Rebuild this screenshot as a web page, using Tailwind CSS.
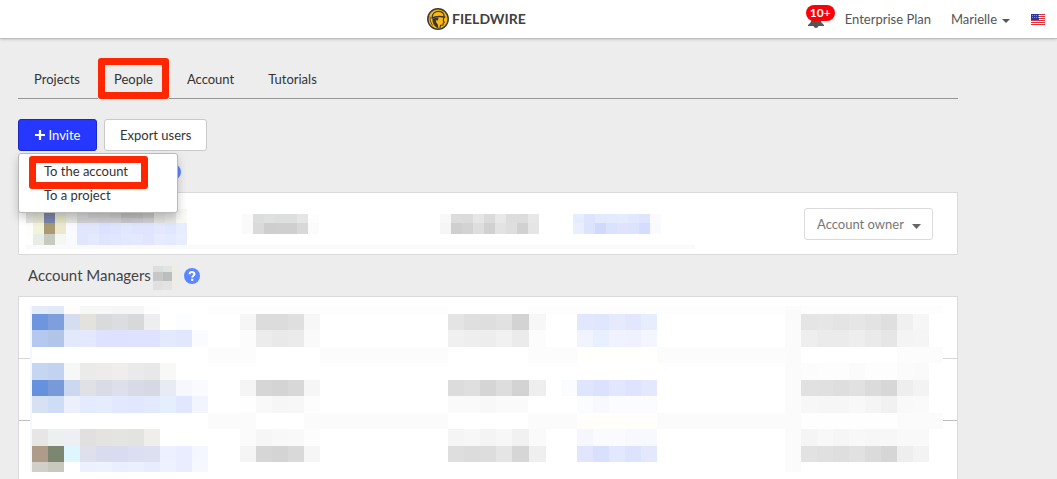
<!DOCTYPE html>
<html lang="en">
<head>
    <meta charset="UTF-8">
    <meta name="viewport" content="width=device-width, initial-scale=1.0">
    <title>Fieldwire - People</title>
    <script src="https://cdn.jsdelivr.net/npm/@tailwindcss/browser@4"></script>
</head>
<body class="bg-[#ededed] font-['Lato',sans-serif] text-[13px] leading-5 text-[#333] min-h-screen overflow-hidden">

    <header class="flex items-center h-[39px] pl-[427px] pr-3 bg-white border-b border-[#bdbdbd] shadow-sm">
        <a href="#" class="flex items-center gap-[3px] text-[14px] font-bold text-[#414042]">
            <svg class="size-[22px]" viewBox="0 0 22 22">
                <circle cx="11" cy="11" r="10.2" fill="#fdb913" stroke="#3a3833" stroke-width="1.5"/>
                <path d="M5.2 9.500C5.200 5.500 8 3.300 11.500 3.300C15 3.300 17 5.500 17.200 8.500" fill="none" stroke="#3a3833" stroke-width="1.200"/>
                <path d="M4.500 10.300C8 8.500 13 8 18.300 9.300" fill="none" stroke="#3a3833" stroke-width="1.700"/>
                <path d="M5.500 10.500L11.500 9.500L11 12.500L9.300 12L9 14L10.800 16.500L11.500 20.500C7.500 19 5 15 5.500 10.500Z" fill="#3a3833"/>
                <path d="M16.600 10L16.300 12.500L17.200 14.500L16.200 15L16 17L13.500 17.200L13 20" fill="none" stroke="#3a3833" stroke-width="1.100"/>
                <path d="M3 8.500L3.300 13L5.500 17.500" fill="none" stroke="#3a3833" stroke-width=".8"/>
            </svg>
            FIELDWIRE
        </a>
        <nav class="flex items-center ml-auto text-[#555]">
            <button type="button" aria-label="Notifications" class="relative w-[29px] h-6 mr-[10px]">
                <svg class="absolute left-[2px] top-[6px] w-4 h-4" viewBox="0 0 16 16" fill="#555">
                    <path d="M8 0C5 0 3.500 2.500 3.500 5.500C3.500 9 2 10.500 0 12V13H5.500A2.600 2.600 0 0 0 10.500 13H16V12C14 10.500 12.500 9 12.500 5.500C12.500 2.500 11 0 8 0Z"/>
                </svg>
                <span class="absolute left-0 -top-[2px] w-[29px] h-4 rounded-full bg-[#fb0007] text-white text-[12px] leading-4 font-bold text-center">10+</span>
            </button>
            <a href="#">Enterprise Plan</a>
            <button type="button" class="flex items-center gap-[5px] ml-5">
                Marielle
                <svg class="w-2 h-1 mt-[3px]" viewBox="0 0 8 4" fill="#555"><path d="M0 0H8L4 4Z"/></svg>
            </button>
            <svg class="w-[14px] h-[11px] ml-[21px]" viewBox="0 0 14 11">
                <rect width="14" height="11" fill="#fff"/>
                <path d="M0 .5H14M0 2.500H14M0 4.500H14M0 6.500H14M0 8.500H14M0 10.500H14" stroke="#e0303c" stroke-width="1.100"/>
                <rect width="8" height="6" fill="#2b3a9a"/>
                <path d="M1 1.500H8M1 3.500H8" stroke="#aeb6e0" stroke-width=".7" stroke-dasharray="1 1"/>
            </svg>
        </nav>
    </header>

    <main class="max-w-[976px] px-[18px] pt-[19px]">

        <nav class="flex gap-[2px] border-b border-[#979797]">
            <a href="#" class="px-4 pt-[11px] pb-[9px]">Projects</a>
            <a href="#" class="relative px-4 pt-[11px] pb-[9px] -mb-px bg-[#ededed]">
                People
                <span class="absolute inset-0 border-[7px] border-[#ff2600] rounded-[3px]"></span>
            </a>
            <a href="#" class="px-4 pt-[11px] pb-[9px]">Account</a>
            <a href="#" class="px-4 pt-[11px] pb-[9px]">Tutorials</a>
        </nav>

        <div class="relative flex gap-[7px] mt-5">
            <button type="button" class="flex items-center justify-center gap-1 w-[79px] h-8 rounded-[3px] bg-[#2638ff] border border-[#1a28c4] text-white">
                <svg class="size-[10px]" viewBox="0 0 10 10"><path d="M5 0V10M0 5H10" stroke="#fff" stroke-width="2.200"/></svg>
                Invite
            </button>
            <button type="button" class="h-8 px-[15px] rounded-[3px] bg-white border border-[#c9c9c9]">Export users</button>

            <div class="absolute left-0 top-[34px] z-10 w-40 h-[60px] py-[5px] bg-white border border-[#b9b9b9] rounded-[3px] shadow-[0_5px_10px_rgba(0,0,0,0.2)]">
                <a href="#" class="block px-[25px] leading-6">To the account</a>
                <a href="#" class="block px-[25px] leading-6">To a project</a>
                <span class="absolute left-[10px] top-[2px] w-[119px] h-[33px] border-[7px] border-[#ff2600] rounded-[3px]"></span>
            </div>
        </div>

        <h2 class="flex items-center h-[41px] pl-[147px]">
            <svg class="size-4" viewBox="0 0 16 16" role="img" aria-label="Help">
                <circle cx="8" cy="8" r="8" fill="#5c86ff"/>
            </svg>
        </h2>

        <section class="relative flex items-center justify-end h-[63px] pr-6 bg-white border border-[#dadada]">
            <svg id="ownerMosaic" class="absolute left-0 top-0 w-[700px] h-[61px]" viewBox="19 193 700 61" shape-rendering="crispEdges"></svg>
            <div class="relative">
                <select aria-label="Role" class="appearance-none w-[129px] h-8 pl-3 bg-white border border-[#dadada] rounded-[3px] text-[#777]">
                    <option>Account owner</option>
                </select>
                <svg class="absolute right-3 top-4 w-[9px] h-[5px] pointer-events-none" viewBox="0 0 9 5" fill="#666"><path d="M0 0H9L4.500 5Z"/></svg>
            </div>
        </section>

        <h2 class="flex items-center h-[41px] pl-[10px] pb-[2px] text-[15px] text-[#444]">
            Account Managers
            <svg id="countMosaic" class="w-[27px] h-6 mt-[6px] ml-[2px]" viewBox="153 265 27 24" shape-rendering="crispEdges"></svg>
            <svg class="size-4 ml-1 mt-[2px]" viewBox="0 0 16 16" role="img" aria-label="Help">
                <circle cx="8" cy="8" r="8" fill="#5c86ff"/>
                <path d="M5.600 6.300C5.600 3.400 10.500 3.400 10.500 6.100C10.500 7.700 8.200 7.700 8.200 9.600" fill="none" stroke="#fff" stroke-width="2"/>
                <rect x="7.100" y="10.700" width="2.200" height="2.200" fill="#fff"/>
            </svg>
        </h2>

        <section class="relative bg-white border border-[#dadada]">
            <div class="h-[62px] border-b border-[#d6d6d6]"></div>
            <div class="h-[62px] border-b border-[#bfbfbf]"></div>
            <div class="h-[62px]"></div>
            <svg id="managerMosaic" class="absolute left-[11px] top-[9px] w-[913px] h-[173px]" viewBox="30 306 913 173" shape-rendering="crispEdges"></svg>
        </section>
    </main>

    <script>
        // each run: x, y, cell width, cell height, colours from left to right
        const owner = [
            [26, 209, 7, 14, 'e6e6e4'],
            [33, 209, 11, 14, 'e4e5d0 7b84ac e3e4c8 e6e6e4 d9d9d9 d0d0ce cfcfcd cacac8 bfbfbd c0c0be c6c6c4'],
            [154, 209, 11, 14, 'e4e4e3 e9e9e7 f9faf5'],
            [77, 218, 11, 5, 'd3d3d5 d3d3d7 d0d0d6 d0d0d5 c8c8cf cacad0 d0d0d4 e3e3e3'],
            [26, 223, 7, 11, 'fdfdfa'],
            [33, 223, 11, 11, 'f1f3da a99a70 ebe8cf f8faff e1e6fe e1e6fd dbe2ff dfe4fe e1e7ff e0e5fd dfe4ff e3e8ff dfe6ff e7ecff'],
            [26, 234, 7, 11, 'fefefc'],
            [33, 234, 11, 11, 'e9ede8 c6cbbf f5f8f2 f8faff e0e6fb e4e9fd dfe5ff e0e6ff e2e8ff e4e9ff e1e6fe e6ebff e4eaff e8edff'],
            [26, 245, 669, 4, 'fafafa'],
            [242, 214, 11, 9, 'fafafa dcdddd e0e0e0 dddede dddede e5e5e5 fdfdfd'],
            [242, 223, 11, 11, 'fafafa dadada cecece cfcfcf cfcfcf d8d8d8 fbfbfb'],
            [440, 214, 11, 9, 'f8f8f8 dbdcdb dbdbdb e6e6e6 dbdbdb e8e8e8 dcdddc dbdcdb e7e7e7'],
            [440, 223, 11, 11, 'f6f6f6 cfcfcf d3d3d3 dedede d1d1d1 e3e3e3 dedede d1d1d1 e5e5e5'],
            [573, 214, 11, 9, 'e6edfd dfe4fe e4eafd e4ebfd e7ebfe e2e8fe dfe5fe fbfbff'],
            [573, 223, 11, 11, 'eaeeff dce3ff d0dbfc dbe2fe dfe3fe dbe3fe d3ddff f9faff']
        ];

        const count = [
            [153, 265, 10, 6, 'dddede e2e3e3'],
            [153, 271, 10, 9, 'c7c7c7 bcbdbd'],
            [153, 280, 10, 9, 'e0e0e0 e3e3e3'],
            [172, 265, 8, 24, 'eeece6']
        ];

        const managers = [
            [30, 306, 913, 173, 'ffffff'],
            // faint bands between the text lines
            [208, 306, 735, 8, 'fdfdfd'],
            [208, 347, 735, 16, 'fcfcfc'],
            [208, 413, 735, 16, 'fbfbfb'],
            [256, 347, 64, 16, 'ffffff'],
            [256, 413, 48, 16, 'ffffff'],
            [448, 306, 80, 8, 'ffffff'],
            [448, 347, 80, 16, 'ffffff'],
            [448, 413, 80, 16, 'ffffff'],
            [577, 347, 80, 16, 'fffffc'],
            [577, 413, 80, 16, 'fffefb'],
            [801, 347, 96, 16, 'ffffff'],
            [801, 413, 96, 16, 'fefefe'],
            [785, 306, 16, 166, 'fbfbfb'],
            [30, 306, 2, 166, 'f6f7fa'],
            // first row
            [32, 306, 16, 8, 'e4ecfa dfe9f8 fefdfb f6f7f7 f7f7f7 f6f6f6 f6f6f6 fdfdfd'],
            [32, 314, 16, 16, '6d96df 7e9fdc d5def1 e3e2dd d9dadb dcdde1 d7d8d9 eeeef0 ffffff fbfdff'],
            [32, 330, 16, 17, 'b5c8ef b1c5e8 e2e9fa e4e9ff dee2ff dfe2ff dfe3ff dfe3ff e4eafd e1e7fe fafbff'],
            [240, 314, 16, 16, 'f6f6f6 dcdcdc dcdcdc dfdfdf f7f7f7'],
            [240, 330, 16, 17, 'fcfcfc ececec e9e9e9 ebebeb fafafa'],
            [448, 314, 16, 16, 'e4e4e4 dfdfdf dedede e1e1e1'],
            [512, 314, 17, 16, 'd3d3d3 f7f7f7'],
            [448, 330, 16, 17, 'f0f0f0 eeeeee ededed f1f1f1'],
            [512, 330, 17, 17, 'ebebeb fcfcfc'],
            [577, 314, 16, 16, 'e2e7fd e0e6fe e5ebfd e2e7fe e6edfd'],
            [577, 330, 16, 17, 'f1f4ff e8effe f0f3ff eff1ff f3f6ff'],
            [801, 314, 16, 16, 'e5e5e5 e6e6e6 e4e4e4 e6e6e6 e3e3e3 dfdfdf f0f0f0 f6f6f6'],
            [801, 330, 16, 17, 'eeeeee ebebeb ebebeb eeeeee eaeaea e6e6e6 f4f4f4 f5f5f5'],
            // second row
            [32, 363, 16, 17, 'c6d6f1 c3d2f1 f6f8f8 ebebea edecea efeeed eaeaea e8e8e8 f8f8f7'],
            [32, 380, 16, 16, '6591df 799ad9 ccd8f0 dfe1e4 d9dce6 dde0ea d8dae7 d6d9e4 e8ebf4 f6f8fe fafbff'],
            [32, 396, 16, 17, 'd6e1f4 cfdcf6 ecf0fd e4eaff e5edfd e2e8ff e1e7ff e3e9ff e5eefd e1e7ff f2f5ff'],
            [240, 380, 16, 16, 'f5f5f5 d6d6d6 d4d4d4 d8d8d8 f6f6f6'],
            [240, 396, 16, 17, 'fefefe f9f9f9 f6f6f6 f7f7f7 fdfdfd'],
            [448, 380, 16, 16, 'dcdcdc dfdfdf d5d5d5 dddddd'],
            [512, 380, 17, 16, 'd3d3d3 eeeeee'],
            [448, 396, 16, 17, 'fafafa fafafa f8f8f8 fafafa fafafa'],
            [561, 380, 16, 16, 'fafcff dfe4ff dae2fe e1e7fe dfe3ff e3e8ff'],
            [577, 396, 16, 17, 'fbfcff f7f9ff fafcff fafcff fbfcff'],
            [801, 363, 16, 17, 'fcfcfc fdfdfd fdfdfd fbfbfb fdfdfd fdfdfd fbfbfb fafafa'],
            [801, 380, 16, 16, 'e1e1e1 e0e0e0 dedede e1e1e1 dbdbdb d7d7d7 eeeeee f3f3f3'],
            [801, 396, 16, 17, 'f7f7f7 f6f6f6 f6f6f6 f8f8f8 f5f5f5 f1f1f1 f9f9f9 fafafa'],
            // third row
            [32, 429, 16, 17, 'e6e6e4 ecf1ef eeeff4 e1e0de e4e3e0 e4e4e0 e3e4df efeeea'],
            [32, 446, 16, 16, 'ae9b8a 7d8671 def6fd e0dfec d9dcef d9dcf0 dbdff1 dde0f1 edf0ff e9edff f4f7ff'],
            [32, 462, 16, 10, 'd2cec8 c8c8bf ffffff ecf1ff edf2ff e9effe ebf0ff e8ecff eef1ff e9edff f6f8ff'],
            [240, 429, 16, 17, 'fbfbfb f6f6f6 f8f8f8 f9f9f9 fdfdfd'],
            [240, 446, 16, 16, 'f5f5f5 d6d6d6 d4d4d4 d9d9d9 f6f6f6'],
            [448, 429, 16, 17, 'f5f5f5 f7f7f7 f4f4f4 f7f7f7'],
            [512, 429, 17, 17, 'f1f1f1 fafafa'],
            [448, 446, 16, 16, 'dedede dcdcdc dddddd e5e5e5'],
            [512, 446, 17, 16, 'd6d6d6 efefef'],
            [577, 429, 16, 17, 'f6f7fe fafbff fafbff f7f9ff f7f9ff'],
            [577, 446, 16, 16, 'e1e5fd d8e0fd e2e9fe dbe3fe e3e8ff'],
            [801, 429, 16, 17, 'f5f5f5 f8f8f8 f6f6f6 f8f8f8 f7f7f7 f7f7f7 f9f9f9 f9f9f9'],
            [801, 446, 16, 16, 'e2e2e2 e0e0e0 dedede e1e1e1 dbdbdb d6d6d6 eeeeee f3f3f3']
        ];

        function drawMosaic(id, runs) {
            const svg = document.getElementById(id);
            runs.forEach(([x, y, w, h, colours]) => {
                colours.split(' ').forEach((colour, i) => {
                    const rect = document.createElementNS('http://www.w3.org/2000/svg', 'rect');
                    rect.setAttribute('x', x + i * w);
                    rect.setAttribute('y', y);
                    rect.setAttribute('width', w);
                    rect.setAttribute('height', h);
                    rect.setAttribute('fill', '#' + colour);
                    svg.appendChild(rect);
                });
            });
        }

        drawMosaic('ownerMosaic', owner);
        drawMosaic('countMosaic', count);
        drawMosaic('managerMosaic', managers);
    </script>
</body>
</html>
